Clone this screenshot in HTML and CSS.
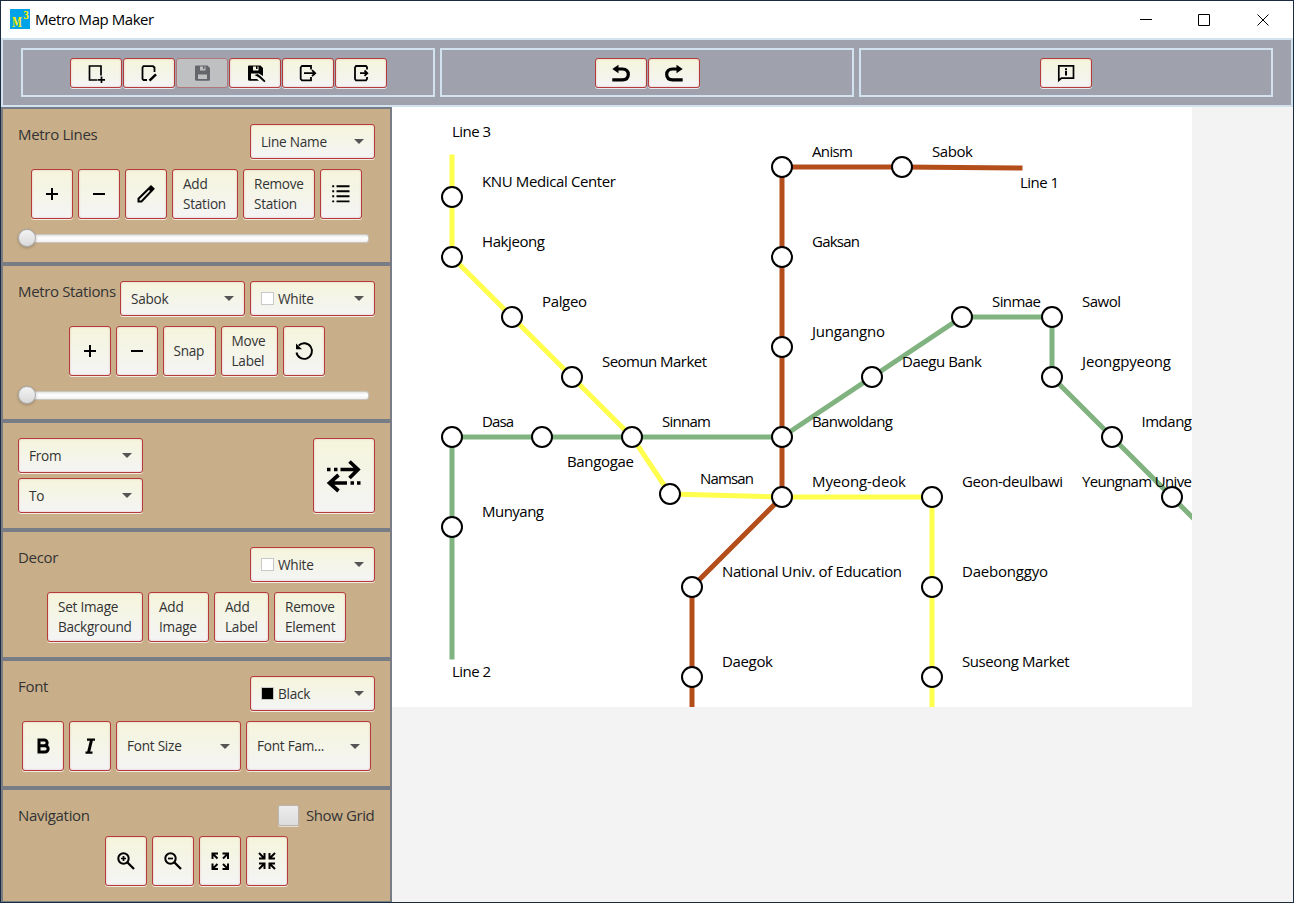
FILE: index.html
```html
<!DOCTYPE html>
<html lang="en">
<head>
<meta charset="utf-8">
<title>Metro Map Maker</title>
<link rel="stylesheet" href="styles.css">
</head>
<body>
<div class="window">
  <header class="titlebar">
    <svg class="logo" width="20" height="20" viewBox="0 0 20 20"><rect width="20" height="20" fill="#00a2e8"/><text class="logo-text" x="2" y="18" font-size="12.500" textLength="10" lengthAdjust="spacingAndGlyphs">M</text><text class="logo-text" x="13" y="10" font-size="11.500" textLength="6" lengthAdjust="spacingAndGlyphs">3</text></svg>
    <span class="window-title">Metro Map Maker</span>
    <svg class="controls" width="130" height="14" viewBox="0 0 130 14" fill="none" stroke="#000"><path d="M0 6.5h12M58.5 1.5h11v11h-11zM117.5 1.5l11 11M128.500 1.500l-11 11"/></svg>
  </header>

  <div class="toolbar">
    <div class="tool-group">
      <button class="btn tool"><svg class="icon" viewBox="0 0 24 24"><path stroke-width="1.700" d="M17 14.500V5H5.500V19H13.500M17.500 15.500v6.500M14 18.800h7"/></svg></button>
      <button class="btn tool"><svg class="icon" viewBox="0 0 24 24"><path stroke-width="1.800" d="M10 19H6.500L5.500 18V6.500L6.500 5.200H16L17.500 6.500V11"/><path stroke-width="2.500" d="M12.500 19.700L19 13.300"/></svg></button>
      <button class="btn tool disabled"><svg class="icon" viewBox="0 0 24 24"><path class="solid" fill-rule="evenodd" d="M5 5.500Q5 4.500 6 4.500H17.500L20 7V18.500Q20 19.800 18.700 19.800H6.500Q5 19.800 5 18.500zM10 5.500V9.500H15.500V5.500H14.500V8H13V5.500zM8 13.500V18H17V13.500z"/></svg></button>
      <button class="btn tool"><svg class="icon" viewBox="0 0 24 24"><path class="solid" fill-rule="evenodd" d="M5 5.500Q5 4.500 6 4.500H17.500L20 7V15L16 12.500H8V18H14L16 19.800H6.500Q5 19.800 5 18.500zM10 5.500V9.500H15.500V5.500H14.500V8H13V5.500z"/><path class="solid" d="M11.500 14l3-1 3 2 5 5-1.200 1.200-5.300-4.700z"/></svg></button>
      <button class="btn tool"><svg class="icon" viewBox="0 0 24 24"><path stroke-width="1.800" d="M15 8.500V5H6L4.700 6.500V18L6 19.300H15V16M8 12.200h11M16 9.200l3.200 3-3.200 3"/></svg></button>
      <button class="btn tool"><svg class="icon" viewBox="0 0 24 24"><path stroke-width="1.800" d="M18 8.500V6L17 5H7L6 6.500V18L7 19.300H17L18 18V16M11 12.200h7M15.500 9.500l2.800 2.700-2.800 2.700"/></svg></button>
    </div>
    <div class="tool-group">
      <button class="btn tool"><svg class="icon" viewBox="0 0 24 24"><path stroke-width="3.200" d="M3.300 18.800h10q6-.3 6-5.400t-6-5.400H8"/><path class="solid" d="M3.300 8L9.500 3.800v8.400z"/></svg></button>
      <button class="btn tool"><svg class="icon" viewBox="0 0 24 24"><path stroke-width="3.200" d="M20.700 18.800h-10q-6-.3-6-5.400t6-5.400H16"/><path class="solid" d="M20.700 8L14.500 3.800v8.400z"/></svg></button>
    </div>
    <div class="tool-group last">
      <button class="btn tool"><svg class="icon" viewBox="0 0 24 24"><path stroke-width="1.700" d="M4.800 4.800h14.700v12.400H7.500l-2.700 2.300z"/><path d="M12 7.200v2M12 10v4.500"/></svg></button>
    </div>
  </div>

  <div class="workspace">
    <aside class="sidebar">
      <section class="panel">
        <div class="head"><h2 class="label">Metro Lines</h2><div class="btn combo"><span>Line Name</span><i class="arrow"></i></div></div>
        <div class="row">
          <button class="btn square"><svg class="icon" viewBox="0 0 24 24"><path d="M6 12h12M12 6v12"/></svg></button>
          <button class="btn square"><svg class="icon" viewBox="0 0 24 24"><path d="M6 12h12"/></svg></button>
          <button class="btn square"><svg class="icon" viewBox="0 0 24 24"><path d="M4.500 19.500v-2.800L17 4.500l2.500 2.300L7.500 19.500z"/><path stroke-width="3.400" d="M15.500 6l3 3"/></svg></button>
          <button class="btn text w66">Add<br>Station</button>
          <button class="btn text w72">Remove<br>Station</button>
          <button class="btn square"><svg class="icon" viewBox="0 0 24 24"><path stroke-width="1.900" d="M7.500 4.200h13M7.500 9.300h13M7.500 14.300h13M7.500 19.400h13M3.200 4.200h2M3.200 9.300h2M3.200 14.300h2M3.200 19.400h2"/></svg></button>
        </div>
        <div class="slider"><i class="thumb"></i><i class="track"></i></div>
      </section>

      <section class="panel">
        <div class="head"><h2 class="label wide">Metro Stations</h2><div class="btn combo"><span>Sabok</span><i class="arrow"></i></div><div class="btn combo"><i class="swatch"></i><span>White</span><i class="arrow"></i></div></div>
        <div class="row">
          <button class="btn square"><svg class="icon" viewBox="0 0 24 24"><path d="M6 12h12M12 6v12"/></svg></button>
          <button class="btn square"><svg class="icon" viewBox="0 0 24 24"><path d="M6 12h12"/></svg></button>
          <button class="btn text w53">Snap</button>
          <button class="btn text w57">Move<br>Label</button>
          <button class="btn square"><svg class="icon" viewBox="0 0 24 24"><path stroke-width="1.900" d="M4.500 13.500a7.800 7.800 0 1 0 2.200-7"/><path class="solid" d="M4 4.500v5.700h6z"/></svg></button>
        </div>
        <div class="slider"><i class="thumb"></i><i class="track"></i></div>
      </section>

      <section class="panel route">
        <div class="stack"><div class="btn combo"><span>From</span><i class="arrow"></i></div><div class="btn combo"><span>To</span><i class="arrow"></i></div></div>
        <button class="btn swap"><svg class="swap-icon" viewBox="0 0 36 36"><g fill="none" stroke="#000" stroke-width="3.700"><path d="M1 11.500h3.500M8 11.500h3.500M14.500 11.500H32M23.500 3.500L32 11.500 23.500 20"/><path d="M3.500 25h17.500M24.500 25h3.500M31 25h3.500M12.500 17L3.500 25l9 8"/></g></svg></button>
      </section>

      <section class="panel">
        <div class="head"><h2 class="label">Decor</h2><div class="btn combo"><i class="swatch"></i><span>White</span><i class="arrow"></i></div></div>
        <div class="row">
          <button class="btn text w96">Set Image<br>Background</button>
          <button class="btn text w61">Add<br>Image</button>
          <button class="btn text w55">Add<br>Label</button>
          <button class="btn text w72">Remove<br>Element</button>
        </div>
      </section>

      <section class="panel">
        <div class="head"><h2 class="label">Font</h2><div class="btn combo"><i class="swatch black"></i><span>Black</span><i class="arrow"></i></div></div>
        <div class="row">
          <button class="btn square"><svg class="icon" viewBox="0 0 24 24"><path stroke-width="3" d="M8 6h5.300a2.800 2.800 0 0 1 0 5.700H8M8 11.700h6a3.100 3.100 0 0 1 0 6.300H8M8 4.500v15"/></svg></button>
          <button class="btn square"><svg class="icon" viewBox="0 0 24 24"><path stroke-width="2.200" d="M9 5.600h8M7.500 18.700h7"/><path stroke-width="3" d="M13.500 6l-3 12.500"/></svg></button>
          <div class="btn combo tall"><span>Font Size</span><i class="arrow"></i></div>
          <div class="btn combo tall"><span>Font Fam...</span><i class="arrow"></i></div>
        </div>
      </section>

      <section class="panel nav">
        <div class="head"><h2 class="label">Navigation</h2><i class="checkbox"></i><span class="label check-label">Show Grid</span></div>
        <div class="row">
          <button class="btn square"><svg class="icon" viewBox="0 0 24 24"><circle cx="9.500" cy="9.500" r="5.200"/><path stroke-width="2.300" d="M13.500 13.500l6.500 6.500"/><path stroke-width="1.700" d="M7 9.500h5M9.500 7v5"/></svg></button>
          <button class="btn square"><svg class="icon" viewBox="0 0 24 24"><circle cx="9.500" cy="9.500" r="5.200"/><path stroke-width="2.300" d="M13.500 13.500l6.500 6.500"/><path stroke-width="1.700" d="M7 9.500h5"/></svg></button>
          <button class="btn square"><svg class="icon" viewBox="0 0 24 24"><path d="M4.500 10V4.500H10M4.500 4.500l5 5M14.500 4.500H20V10M20 4.500l-5 5M4.500 14.500V20H10M4.500 20l5-5M14.500 20H20v-5.500M20 20l-5-5"/></svg></button>
          <button class="btn square"><svg class="icon" viewBox="0 0 24 24"><path d="M4 9.500H9.500V4M9.500 9.500L4 4M14.500 4V9.500H20M14.500 9.500L20 4M4 14.500H9.500V20M9.500 14.500L4 20M20 14.500H14.500V20M14.500 14.500L20 20"/></svg></button>
        </div>
      </section>
    </aside>

    <main class="canvas">
      <svg class="map" width="800" height="600" viewBox="392 107 800 600">
        <rect x="392" y="107" width="800" height="600" fill="#fff"/>
        <g fill="none" stroke-width="5" stroke-linecap="square">
          <path stroke="#80b380" d="M452 657V437H782L962 317H1052V377L1202 527"/>
          <path stroke="#ffff4d" d="M452 157V257L632 437 670 494 782 497H932V717"/>
          <path stroke="#b34d1a" d="M1020 168L902 167H782V497L692 587V717"/>
        </g>
        <g fill="#fff" stroke="#000" stroke-width="2">
          <circle cx="452" cy="197" r="10"/><circle cx="452" cy="257" r="10"/><circle cx="512" cy="317" r="10"/><circle cx="572" cy="377" r="10"/><circle cx="632" cy="437" r="10"/><circle cx="670" cy="494" r="10"/>
          <circle cx="782" cy="167" r="10"/><circle cx="902" cy="167" r="10"/><circle cx="782" cy="257" r="10"/><circle cx="782" cy="347" r="10"/><circle cx="782" cy="437" r="10"/><circle cx="782" cy="497" r="10"/><circle cx="692" cy="587" r="10"/><circle cx="692" cy="677" r="10"/>
          <circle cx="452" cy="437" r="10"/><circle cx="542" cy="437" r="10"/><circle cx="452" cy="527" r="10"/><circle cx="872" cy="377" r="10"/><circle cx="962" cy="317" r="10"/><circle cx="1052" cy="317" r="10"/><circle cx="1052" cy="377" r="10"/><circle cx="1112" cy="437" r="10"/><circle cx="1172" cy="497" r="10"/>
          <circle cx="932" cy="497" r="10"/><circle cx="932" cy="587" r="10"/><circle cx="932" cy="677" r="10"/>
        </g>
        <g class="names">
          <text x="452" y="137" textLength="39">Line 3</text>
          <text x="452" y="677" textLength="39">Line 2</text>
          <text x="1020" y="188" textLength="39">Line 1</text>
          <text x="482" y="187" textLength="134">KNU Medical Center</text>
          <text x="482" y="247" textLength="63">Hakjeong</text>
          <text x="542" y="307" textLength="45">Palgeo</text>
          <text x="602" y="367" textLength="105">Seomun Market</text>
          <text x="812" y="157" textLength="41">Anism</text>
          <text x="932" y="157" textLength="41">Sabok</text>
          <text x="812" y="247" textLength="48">Gaksan</text>
          <text x="812" y="337" textLength="73">Jungangno</text>
          <text x="902" y="367" textLength="80">Daegu Bank</text>
          <text x="992" y="307" textLength="49">Sinmae</text>
          <text x="1082" y="307" textLength="39">Sawol</text>
          <text x="1082" y="367" textLength="89">Jeongpyeong</text>
          <text x="1141.500" y="427" textLength="50.500">Imdang</text>
          <text x="482" y="427" textLength="32">Dasa</text>
          <text x="662" y="427" textLength="49">Sinnam</text>
          <text x="812" y="427" textLength="81">Banwoldang</text>
          <text x="567" y="467" textLength="67">Bangogae</text>
          <text x="700" y="484" textLength="54">Namsan</text>
          <text x="812" y="487" textLength="94">Myeong-deok</text>
          <text x="962" y="487" textLength="101">Geon-deulbawi</text>
          <text x="1082" y="487" textLength="110">Yeungnam Unive</text>
          <text x="482" y="517" textLength="62">Munyang</text>
          <text x="722" y="577" textLength="180">National Univ. of Education</text>
          <text x="722" y="667" textLength="51">Daegok</text>
          <text x="962" y="577" textLength="86">Daebonggyo</text>
          <text x="962" y="667" textLength="107.500">Suseong Market</text>
        </g>
      </svg>
    </main>
  </div>
</div>
</body>
</html>
```
FILE: styles.css
```css
* { box-sizing: border-box; }

body {
  margin: 0;
  overflow: hidden;
  font-family: "Open Sans", "Noto Sans", sans-serif;
}

.window {
  width: 1294px;
  height: 903px;
  border: 1px solid #1c2b40;
  display: flex;
  flex-direction: column;
  overflow: hidden;
  background: #fff;
}

.titlebar {
  height: 37px;
  flex: none;
  display: flex;
  align-items: center;
  padding: 0 23px 0 9px;
}
.logo { margin-top: -1px; }
.logo-text { font-family: "DejaVu Serif", serif; font-weight: bold; fill: #ffee00; }
.window-title { margin: -2px 0 0 5px; font-size: 15px; letter-spacing: -0.45px; color: #000; }
.controls { margin-left: auto; }

.toolbar {
  height: 69px;
  flex: none;
  display: flex;
  gap: 5px;
  padding: 8px 18px;
  border: 2px solid #d2e2ef;
  background: #9fa2ad;
}
.tool-group {
  width: 414px;
  border: 2px solid #d2e2ef;
  display: flex;
  justify-content: center;
  gap: 1px;
  padding: 8px 0 0 1px;
}
.last { padding: 8px 0 0; }

.btn {
  flex: none;
  margin: 0;
  padding: 0;
  border: 1px solid #b53b3b;
  border-radius: 3px;
  background: linear-gradient(#f5f5dc, #f4f4f5);
  box-shadow: 0 1px 0 rgba(255, 255, 255, .75), inset 0 0 2px rgba(181, 59, 80, .3);
  color: #333;
  font: 13.6px/20px "Open Sans", "Noto Sans", sans-serif;
  letter-spacing: -0.25px;
  display: flex;
  align-items: center;
  justify-content: center;
}
.tool { width: 52px; height: 30px; }
.disabled { background: #bec0c1; border-color: #b1777d; box-shadow: none; }
.square { width: 42px; height: 50px; }
.text { height: 50px; justify-content: flex-start; text-align: left; padding-left: 10px; white-space: nowrap; }
.w53 { width: 53px; }
.w55 { width: 55px; }
.w57 { width: 57px; }
.w61 { width: 61px; }
.w66 { width: 66px; }
.w72 { width: 72px; }
.w96 { width: 96px; }

.icon { width: 24px; height: 24px; flex: none; fill: none; stroke: #000; stroke-width: 2; }
.solid { fill: #000; stroke: none; }
.disabled .solid { fill: #65666b; }

.workspace { flex: 1; display: flex; min-height: 0; }
.sidebar { width: 391px; flex: none; }
.panel {
  border: 2px solid #777c85;
  background: #c8af8a;
  padding: 15px;
  display: flex;
  flex-direction: column;
  gap: 10px;
}
.head { display: flex; gap: 5px; align-items: flex-start; }
.label {
  margin: 0 auto 0 0;
  font-size: 15px;
  font-weight: 400;
  line-height: 21px;
  letter-spacing: -0.3px;
  color: #333;
  white-space: nowrap;
}
.wide { width: 97px; letter-spacing: -0.36px; }
.row { display: flex; gap: 5px; justify-content: center; }

.combo { width: 125px; height: 35px; justify-content: flex-start; padding: 0 10px; }
.combo span { padding-top: 1px; }
.tall { height: 50px; }
.tall span { padding-top: 0; }
.arrow {
  margin-left: auto;
  border: 5px solid transparent;
  border-top-color: #555;
  border-bottom: 0;
}
.swatch { width: 13px; height: 13px; margin-right: 4px; border: 1px solid #c8c8c8; background: #fff; }
.black { background: #000; }

.slider { height: 18px; padding-right: 6px; display: flex; align-items: center; }
.track {
  flex: 1;
  height: 9px;
  margin-left: -3px;
  border-radius: 3px;
  border: 1px solid #c9c5be;
  background: linear-gradient(#e4e4e4, #fff 40%, #f0f0f0);
}
.thumb {
  width: 18px;
  height: 18px;
  z-index: 1;
  border-radius: 50%;
  border: 1px solid #a9a9ab;
  background: linear-gradient(#f3f3f3, #d9d9d9);
  box-shadow: 0 1px 3px rgba(0, 0, 0, .25);
}

.route { flex-direction: row; justify-content: space-between; }
.stack { display: flex; flex-direction: column; gap: 5px; }
.swap { width: 62px; height: 75px; }
.swap-icon { width: 36px; height: 36px; }

.nav { height: 115px; }
.checkbox {
  width: 21px;
  height: 21px;
  border: 1px solid #b9b5b0;
  border-radius: 2px;
  background: linear-gradient(#ededed, #dcdcdc);
  box-shadow: 0 1px 0 rgba(255, 255, 255, .6);
}
.check-label { width: 69px; margin: 0 0 0 2px; letter-spacing: -0.4px; }

.canvas { flex: 1; background: #f3f3f3; }
.map { display: block; }
.names { font-size: 15px; fill: #000; }
```
